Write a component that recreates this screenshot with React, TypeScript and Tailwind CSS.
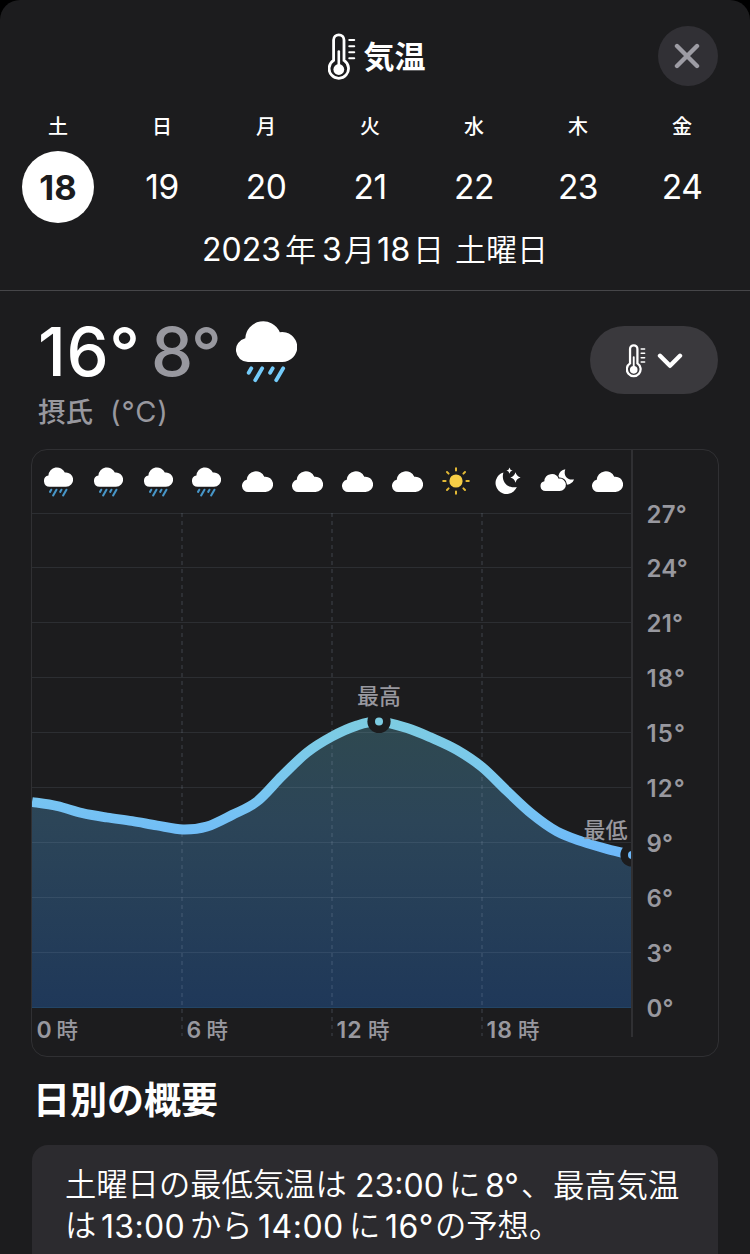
import React from "react";

const JP = "font-['Inter','Noto_Sans_CJK_JP',sans-serif]";

const CLOUD =
  "M12 41A12 12 0 0 1 9.3 17.3A18 18 0 0 1 43.8 11.2A15 15 0 1 1 46 41Z";

function Thermometer({ className, weight = 2.8 }: { className: string; weight?: number }) {
  return (
    <svg viewBox="0 0 28 48" className={className} fill="none" stroke="#fff" strokeLinecap="round">
      <path
        strokeWidth={weight}
        d="M5.6 27.4V7A5.2 5.2 0 0 1 16 7V27.4A9.7 9.7 0 1 1 5.6 27.4Z"
      />
      <path strokeWidth="2.6" d="M10.8 18.5V34" />
      <circle cx="10.8" cy="36.5" r="5.4" fill="#fff" stroke="none" />
      <path strokeWidth="2.1" d="M21.3 7H26.2M21.3 13.2H26.2M21.3 19.3H26.2M21.3 25.3H26.2" />
    </svg>
  );
}

function RainCloud({ className, rain, weight = 3.8 }: { className: string; rain: string; weight?: number }) {
  return (
    <svg viewBox="0 0 61 62" className={className}>
      <path d={CLOUD} fill="#fff" />
      <path
        d="M15.3 47.3L12.7 51.8M26.2 47.3L19.2 59.2M36.7 47.3L34.1 51.8M47.2 47.3L40.2 59.2"
        stroke={rain}
        strokeWidth={weight}
        strokeLinecap="round"
        fill="none"
      />
    </svg>
  );
}

function HourIcon({ kind }: { kind: string }) {
  if (kind === "rain") return <RainCloud className="ml-px h-[30px] w-[29px]" rain="#4796c8" weight={4.4} />;
  if (kind === "cloud")
    return (
      <svg viewBox="0 0 61 41" className="h-[21px] w-[31px]">
        <path d={CLOUD} fill="#fff" />
      </svg>
    );
  if (kind === "sun")
    return (
      <svg viewBox="-15 -15 30 30" className="-mt-0.5 -ml-0.5 h-[30px] w-[30px]">
        <circle r="6.6" fill="#f7ce46" />
        <path
          d="M0-12.8V-10.4M0 12.8V10.4M-12.8 0H-10.4M12.8 0H10.4M-9-9L-7.4-7.4M9-9L7.4-7.4M-9 9L-7.4 7.4M9 9L7.4 7.4"
          stroke="#e3b935"
          strokeWidth="2"
          strokeLinecap="round"
        />
      </svg>
    );
  if (kind === "moon")
    return (
      <svg viewBox="492 466 30 30" className="-mt-0.5 h-[30px] w-[30px]" fill="#fff">
        <path d="M503.4 472.4C500.8 480.6 507 489.2 516.8 486.9A11 11 0 1 1 503.4 472.4Z" />
        <path d="M509.5 467.4Q510 470.1 512.6 470.6Q510 471.1 509.5 473.8Q509 471.1 506.4 470.6Q509 470.1 509.5 467.4Z" />
        <path d="M515.5 472.3Q516.6 476.4 520.6 477.5Q516.6 478.6 515.5 482.7Q514.4 478.6 510.4 477.5Q514.4 476.4 515.5 472.3Z" />
      </svg>
    );
  return (
    <svg viewBox="539.5 466 36 30" className="-mt-0.5 h-[30px] w-[36px]">
      <path
        d="M565.8 469.2C563.6 475.2 567.5 480.6 574.6 479.4A8 8 0 0 1 564 484.2A8 8 0 0 1 559 475.4A8.6 8.6 0 0 1 565.8 469.2Z"
        fill="#fff"
      />
      <g transform="translate(541 474) scale(.415)">
        <path d={CLOUD} fill="#1c1c1e" stroke="#1c1c1e" strokeWidth="5" />
        <path d={CLOUD} fill="#fff" />
      </g>
    </svg>
  );
}

const DAYS = [
  ["土", "18"],
  ["日", "19"],
  ["月", "20"],
  ["火", "21"],
  ["水", "22"],
  ["木", "23"],
  ["金", "24"],
];

const HOURS = [
  "rain", "rain", "rain", "rain", "cloud", "cloud",
  "cloud", "cloud", "sun", "moon", "cloudmoon", "cloud",
];

const POINTS: [number, number][] = [
  [0, 289], [25, 293], [50, 300], [75, 304.5], [100, 308], [125, 312.5], [151, 316.5],
  [175, 313.5], [200, 302], [225, 288.5], [250, 263], [275, 239.5], [300, 223.5],
  [325, 212.5], [347, 208.5], [375, 215], [400, 225], [425, 237], [450, 254],
  [475, 278], [500, 301], [525, 318.5], [550, 328.5], [575, 336], [600, 342],
];

const LINE = POINTS.map(([x, y], i) => {
  if (i === 0) return `M${x} ${y}`;
  const a = POINTS[Math.max(i - 2, 0)];
  const b = POINTS[i - 1];
  const d = POINTS[Math.min(i + 1, POINTS.length - 1)];
  return `C${b[0] + (x - a[0]) / 6} ${b[1] + (y - a[1]) / 6} ${x - (d[0] - b[0]) / 6} ${y - (d[1] - b[1]) / 6} ${x} ${y}`;
}).join("");

const LEVELS = [27, 24, 21, 18, 15, 12, 9, 6, 3, 0];

function Plot() {
  return (
    <svg viewBox="0 0 600 523" className="block h-[523px] w-[600px]">
      <defs>
        <linearGradient id="line" gradientUnits="userSpaceOnUse" x1="0" y1="208" x2="0" y2="342">
          <stop offset="0" stopColor="#7dcce2" />
          <stop offset="0.5" stopColor="#79c7f0" />
          <stop offset="1" stopColor="#6db8fa" />
        </linearGradient>
        <linearGradient id="area" gradientUnits="userSpaceOnUse" x1="0" y1="208" x2="0" y2="494">
          <stop offset="0" stopColor="#2f4950" />
          <stop offset="0.35" stopColor="#2c4558" />
          <stop offset="1" stopColor="#1f3859" />
        </linearGradient>
      </defs>
      <path d={`${LINE}V494H0Z`} fill="url(#area)" />
      {LEVELS.map((level, i) => (
        <rect key={level} y={Math.round(i * 54.9 - 0.5)} width="600" height="1" fill={level ? "#a4b4c8" : "#2a6eae"} fillOpacity={level ? 0.12 : 0.5} />
      ))}
      <path d="M150 0V523M300 0V523M450 0V523" stroke="#a4b4c8" strokeOpacity="0.13" strokeWidth="2" strokeDasharray="4 4" />
      <path d={LINE} fill="none" stroke="url(#line)" strokeWidth="9.8" />
      <circle cx="347" cy="208.5" r="11.6" fill="#1c1c1e" />
      <circle cx="347" cy="208.5" r="4" fill="#7dcce2" />
      <circle cx="600" cy="342" r="11.6" fill="#1c1c1e" />
      <circle cx="600" cy="342" r="4" fill="#6db8fa" />
      <text x="347" y="191" textAnchor="middle" className="fill-[#98989f] text-[22px] font-medium">最高</text>
      <text x="573.5" y="325" textAnchor="middle" className="fill-[#98989f] text-[22px] font-medium">最低</text>
    </svg>
  );
}

const TIMES = ["0", "6", "12", "18"];

export default function App() {
  return (
    <div className="h-[1254px] w-[750px] overflow-hidden bg-black">
      <main lang="ja" className={`flex h-full flex-col overflow-hidden rounded-t-[20px] bg-[#1c1c1e] text-white ${JP}`}>
        <header className="grid h-[108px] shrink-0 grid-cols-[1fr_auto_1fr] items-center px-8">
          <span />
          <h1 className="mt-1 ml-[3px] flex items-center gap-2">
            <Thermometer className="mt-px h-12 w-7" />
            <span className="pt-0.5 text-[31px] leading-10 font-bold">気温</span>
          </h1>
          <button aria-label="閉じる" className="mt-1 flex size-[60px] items-center justify-center justify-self-end rounded-full bg-[#313035]">
            <svg viewBox="0 0 26 26" className="-ml-0.5 size-[26px]" stroke="#9d9ca4" strokeWidth="4.4" strokeLinecap="round">
              <path d="M3 3L23 23M23 3L3 23" />
            </svg>
          </button>
        </header>

        <nav className="grid w-[734px] shrink-0 grid-cols-7 pl-[6px]">
          {DAYS.map(([name, date], i) => (
            <div key={date} className="flex flex-col items-center">
              <span className="flex h-[43px] items-start pt-1 text-[20px] leading-[30px] font-medium">{name}</span>
              <span
                className={
                  i === 0
                    ? "flex size-[72px] items-center justify-center rounded-full bg-white pt-px text-[34.5px] font-bold text-[#1c1c1e]"
                    : "flex size-[72px] items-center justify-center pt-px text-[33.5px] tracking-[-0.5px]"
                }
              >
                {date}
              </span>
            </div>
          ))}
        </nav>

        <p className="flex h-[68px] shrink-0 items-start border-b border-[#464649] pt-[7px] pl-[202px] text-[31px] leading-[40px] font-[350] whitespace-nowrap">
          <span className="w-[83px] text-[32px] font-normal">2023</span>
          <span className="w-[37px]">年</span>
          <span className="w-[22px] text-[32px] font-normal">3</span>
          <span className="w-[33px]">月</span>
          <span className="w-[36px] text-[32.5px] font-normal">18</span>
          <span className="w-[42px]">日</span>
          <span>土曜日</span>
        </p>

        <section className="flex h-[158px] shrink-0 justify-between pt-[29px] pr-8 pl-[38px]">
          <div>
            <div className="flex h-[68px] items-start text-[67px] leading-[64px] font-medium">
              <span className="w-[113px] tracking-[0.6px]">16°</span>
              <span className="w-[85px] tracking-[-1.4px] text-[#98989f]">8°</span>
              <RainCloud className="mt-px h-[62px] w-[61px]" rain="#74cbfa" />
            </div>
            <p className="mt-1 flex text-[27.5px] leading-10 font-medium text-[#98989f]">
              <span>摂氏</span>
              <span className="ml-[17px] text-[29px] font-normal tracking-[0.9px]">(°C)</span>
            </p>
          </div>
          <button className="mt-[6px] flex h-[68px] w-[128px] items-center rounded-[34px] bg-[#3a393d] pl-[36px]">
            <Thermometer className="mt-px h-[34px] w-5" weight={3.2} />
            <svg viewBox="0 0 26 16" className="ml-[11px] mt-0.5 h-4 w-[26px]" fill="none" stroke="#fff" strokeWidth="4.4" strokeLinecap="round" strokeLinejoin="round">
              <path d="M3 2.8L13 12.8L23 2.8" />
            </svg>
          </button>
        </section>

        <section className="ml-[31px] flex h-[608px] w-[688px] shrink-0 rounded-[16px] border border-[#303033]">
          <div className="w-[600px]">
            <div className="flex h-[63px] items-center">
              {HOURS.map((kind, i) => (
                <span
                  key={i}
                  className={
                    i < 3
                      ? "flex w-[50px] shrink-0 items-center justify-center pl-0.5"
                      : i === 3
                        ? "flex w-[50px] shrink-0 items-center justify-center pr-0.5"
                        : "flex w-[50px] shrink-0 items-center justify-center"
                  }
                >
                  <HourIcon kind={kind} />
                </span>
              ))}
            </div>
            <Plot />
            <div className="-mt-[21px] grid h-[30px] grid-cols-4 text-[23px] leading-[30px] font-semibold text-[#98989f]">
              {TIMES.map((time) => (
                <span key={time} className="flex pl-[4.5px]">
                  <span className={time.length > 1 ? "w-[31.5px] tracking-[1px]" : "w-[20px]"}>{time}</span>
                  <span className="text-[21.5px] font-medium">時</span>
                </span>
              ))}
            </div>
          </div>
          <div className="-ml-px h-[587px] w-0.5 shrink-0 bg-[#303033]" />
          <div className="flex flex-col pt-[37.5px] pl-[13.5px] text-[24px] leading-[54.9px] font-semibold text-[#98989f]">
            {LEVELS.map((level) => (
              <span
                key={level}
                className={level > 11 && level < 20 ? "h-[54.9px] tracking-[1.1px]" : "h-[54.9px] tracking-[0.2px]"}
              >
                {level}°
              </span>
            ))}
          </div>
        </section>

        <h2 className="mt-[20px] ml-[33px] h-[48px] shrink-0 text-[37px] leading-[48px] font-bold">日別の概要</h2>

        <section className="mx-8 mt-[20px] h-[130px] shrink-0 rounded-[16px] bg-[#2c2b2f] pt-[20px] pl-[33px] text-[31.3px] leading-[41px] font-[350] whitespace-nowrap">
          <p className="flex h-[41px]">
            <span className="w-[290px]">土曜日の最低気温は</span>
            <span className="w-[94px] text-[32px] font-normal">23:00</span>
            <span className="w-[36px]">に</span>
            <span className="w-[36px] text-[32px] font-normal">8°</span>
            <span className="w-[32px]">、</span>
            <span className="text-[31.6px]">最高気温</span>
          </p>
          <p className="flex h-[41px]">
            <span className="w-[36px]">は</span>
            <span className="w-[89px] text-[32px] font-normal tracking-[0.3px]">13:00</span>
            <span className="w-[68px]">から</span>
            <span className="w-[91px] text-[32px] font-normal tracking-[0.5px]">14:00</span>
            <span className="w-[36px]">に</span>
            <span className="w-[50px] text-[32px] font-normal tracking-[0.5px]">16°</span>
            <span>の予想。</span>
          </p>
        </section>
      </main>
    </div>
  );
}
